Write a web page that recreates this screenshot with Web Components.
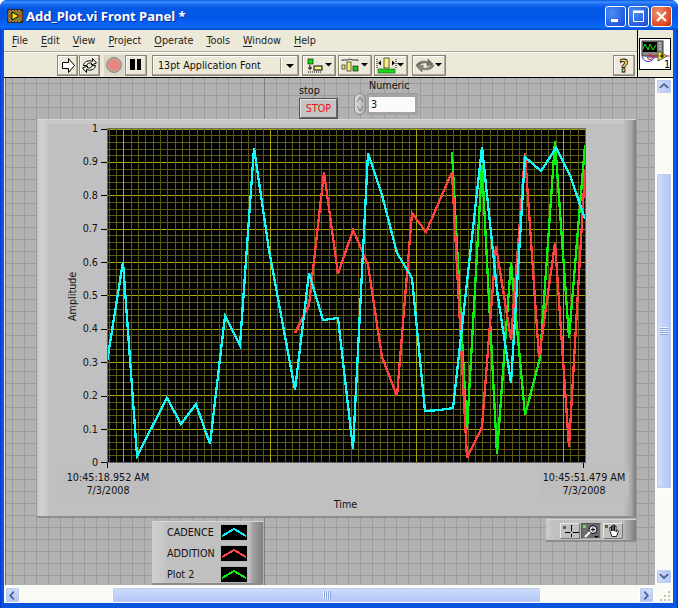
<!DOCTYPE html>
<html>
<head>
<meta charset="utf-8">
<title>Add_Plot.vi Front Panel</title>
<style>
	html, body { margin: 0; padding: 0; background: #fff; }
	body { font: 10.7px "DejaVu Sans", sans-serif; font-stretch: condensed; color: #111; }
</style>
</head>
<body>

<xp-window caption="Add_Plot.vi Front Panel *">
	<lv-menubar slot="menu"></lv-menubar>
	<lv-toolbar slot="toolbar"></lv-toolbar>
	<lv-vi-icon slot="icon"></lv-vi-icon>
	<lv-panel slot="panel">
		<lv-stop style="left:295px;top:6px"></lv-stop>
		<lv-numeric style="left:350px;top:1px" value="3"></lv-numeric>
		<lv-graph style="left:33px;top:41px"></lv-graph>
		<lv-legend style="left:148px;top:443px"></lv-legend>
		<lv-palette style="left:542px;top:441px"></lv-palette>
	</lv-panel>
	<xp-scrollbar slot="vscroll" orientation="v" before="79" size="316"></xp-scrollbar>
	<xp-scrollbar slot="hscroll" orientation="h" before="92" size="429"></xp-scrollbar>
</xp-window>

<script>
class XpWindow extends HTMLElement {
	constructor() {
		super();
		this.shadowDOM = this.attachShadow({mode: 'open'});
	}

	connectedCallback() {
		this.shadowDOM.innerHTML = `
		<style>
		:host {
			display: block;
			width: 678px;
			height: 608px;
			box-sizing: border-box;
			padding: 0 5px 5px 4px;
			background: linear-gradient(90deg, #0831d9 0, #0855dd 2px, #0855dd 4px, #0855dd 673px, #0a5fe8 675px, #0831c9 678px);
			border-radius: 7px 7px 0 0;
			overflow: hidden;
		}
		.title {
			height: 30px;
			box-sizing: border-box;
			margin: 0 -5px 0 -4px;
			padding: 6px 6px 0 7px;
			display: flex;
			align-items: flex-start;
			gap: 3px;
			background: linear-gradient(180deg, #0a5ae6 0, #3b8ffb 2px, #1f70f4 4px, #0458e6 8px, #0357e8 18px, #0662f4 24px, #0a6cfa 27px, #0348d0 30px);
		}
		.title > svg { margin-top: 3px; }
		.caption {
			flex: 1;
			color: #fff;
			font: bold 13px/21px "Noto Sans", sans-serif;
			font-stretch: normal;
			text-shadow: 1px 1px 0 #0b2a9a;
			white-space: nowrap;
		}
		.btns { display: flex; gap: 2px; }
		.btn {
			width: 21px;
			height: 21px;
			box-sizing: border-box;
			border: 1px solid #fff;
			border-radius: 3px;
			background: radial-gradient(circle at 30% 30%, #4f8ef5, #2259dc 75%, #1a48c0);
			display: block;
		}
		.btn.close { background: radial-gradient(circle at 30% 30%, #f09070, #dc4a22 70%, #b53010); }
		.btn svg { display: block; width: 19px; height: 19px; }
		.head { display: flex; height: 48px; background: #ece9d8; border-bottom: 1px solid #000; box-sizing: border-box; }
		.bars { width: 633px; display: flex; flex-direction: column; border-right: 1px solid #000; }
		.iconbox { flex: 1; display: flex; align-items: center; justify-content: center; padding: 0 1px 0 0; }
		.mid { display: flex; height: 507px; }
		.panel { width: 651px; }
		.vs { width: 18px; }
		.foot { display: flex; height: 18px; }
		.hs { width: 651px; }
		.grip { flex: 1; background: #fbfbf6; }
		</style>
		<div class="title">
			<svg width="16" height="14" viewBox="0 1 16 14">
				<rect x="0" y="1" width="16" height="14" fill="#3a2a10"/>
				<rect x="1" y="3" width="14" height="10" fill="#8a7a30"/>
				<path d="M3 2v1M6 2v1M9 2v1M12 2v1M3 13v1M6 13v1M9 13v1M12 13v1" stroke="#fff"/>
				<path d="M5 4l7 4-7 4z" fill="#f4e818" stroke="#000"/>
				<path d="M0 8h5M11 8h5" stroke="#e02020"/>
			</svg>
			<span class="caption">${this.getAttribute('caption')}</span>
			<span class="btns">
				<span class="btn"><svg viewBox="0 0 19 19"><rect x="5" y="12" width="7" height="3" fill="#fff"/></svg></span>
				<span class="btn"><svg viewBox="0 0 19 19"><path d="M4.500 5.500h10v9h-10z" fill="none" stroke="#fff"/><path d="M4 4.500h11" stroke="#fff" stroke-width="2"/></svg></span>
				<span class="btn close"><svg viewBox="0 0 19 19"><path d="M5 5l9 9M14 5l-9 9" stroke="#fff" stroke-width="2.200"/></svg></span>
			</span>
		</div>
		<div class="head">
			<div class="bars"><slot name="menu"></slot><slot name="toolbar"></slot></div>
			<div class="iconbox"><slot name="icon"></slot></div>
		</div>
		<div class="mid">
			<div class="panel"><slot name="panel"></slot></div>
			<div class="vs"><slot name="vscroll"></slot></div>
		</div>
		<div class="foot">
			<div class="hs"><slot name="hscroll"></slot></div>
			<div class="grip">
				<svg width="18" height="18" viewBox="0 0 18 18"><path d="M13 6h2v2h-2zM13 10h2v2h-2zM9 10h2v2H9zM13 14h2v2h-2zM9 14h2v2H9zM5 14h2v2H5z" fill="#c4c1ae"/></svg>
			</div>
		</div>
		`;
	}
}
customElements.define('xp-window', XpWindow);

class LvMenubar extends HTMLElement {
	constructor() {
		super();
		this.shadowDOM = this.attachShadow({mode: 'open'});
		const items = ['File', 'Edit', 'View', 'Project', 'Operate', 'Tools', 'Window', 'Help'];
		this.shadowDOM.innerHTML = `
		<style>
		:host {
			display: flex;
			height: 22px;
			box-sizing: border-box;
			align-items: center;
			gap: 13px;
			padding-left: 8px;
			border-bottom: 1px solid #aca899;
			box-shadow: 0 1px 0 #fff;
			color: #222;
		}
		u { text-decoration-thickness: 1px; text-underline-offset: 2px; }
		</style>
		${items.map(i => `<span><u>${i[0]}</u>${i.slice(1)}</span>`).join('')}
		`;
	}
}
customElements.define('lv-menubar', LvMenubar);

class LvToolbar extends HTMLElement {
	constructor() {
		super();
		this.shadowDOM = this.attachShadow({mode: 'open'});
		const arrow = '<path d="M22 7h7l-3.500 3.500z" fill="#000"/>';
		this.shadowDOM.innerHTML = `
		<style>
		:host {
			display: flex;
			flex: 1;
			align-items: center;
			padding: 1px 0 0 53px;
			height: 25px;
			box-sizing: border-box;
		}
		.b {
			height: 21px;
			box-sizing: border-box;
			border: 1px solid;
			border-color: #fff #5c5a4e #5c5a4e #fff;
			outline: 1px solid #8a8778;
			outline-offset: -1px;
			background: #ece9d8;
			display: flex;
			align-items: center;
			justify-content: center;
			box-shadow: inset -1px -1px 0 #aca899, inset 1px 1px 0 #fff;
		}
		.flat { outline: none; border-color: #d8d5c4; background: #dcd9c8; box-shadow: none; }
		.font {
			width: 147px;
			margin-left: 5px;
			justify-content: flex-start;
			padding-left: 5px;
			position: relative;
			color: #111;
		}
		.font i {
			position: absolute;
			right: 0;
			top: 2px;
			bottom: 2px;
			width: 17px;
			border-left: 1px solid #9a9788;
			box-shadow: inset 1px 0 0 #fff;
		}
		.font i::after {
			content: "";
			position: absolute;
			left: 5px;
			top: 6px;
			border: 4px solid transparent;
			border-top: 4px solid #000;
			border-bottom: 0;
		}
		svg { display: block; }
		</style>
		<span class="b" style="width:21px"><svg width="19" height="19" viewBox="0 0 19 19"><path d="M4.500 6.500h6v-4l6 7-6 7v-4h-6z" fill="#fff" stroke="#000"/></svg></span>
		<span class="b" style="width:21px;margin-left:1px"><svg width="19" height="19" viewBox="0 0 19 19"><path d="M3.500 9.500a6 5 0 0 1 9-4v-3l4 4.500-5 2v-2a4 3 0 0 0-5 2.500z" fill="#fff" stroke="#000"/><path d="M15.500 9.500a6 5 0 0 1-9 4v3l-4-4.500 5-2v2a4 3 0 0 0 5-2.500z" fill="#fff" stroke="#000"/></svg></span>
		<span class="b flat" style="width:20px;margin-left:4px"><svg width="18" height="18" viewBox="0 0 18 18"><circle cx="9" cy="9" r="7.500" fill="#b0ada0" stroke="#8e8b7e"/><circle cx="9" cy="9" r="6" fill="#e8877f"/></svg></span>
		<span class="b" style="width:22px;margin-left:1px"><svg width="20" height="20" viewBox="0 0 20 20"><path d="M4 4h5v11H4zM11 4h4v11h-4z" fill="#000"/></svg></span>
		<span class="b font">13pt Application Font<i></i></span>
		<span class="b" style="width:34px;margin-left:3px"><svg width="32" height="19" viewBox="0 0 32 19"><rect x="5" y="3" width="5" height="5" fill="#18d818" stroke="#000" stroke-width="0.600"/><path d="M7 9v5M5 12h4" stroke="#000"/><rect x="11" y="10" width="8" height="4" fill="#f8f078" stroke="#000"/><path d="M5 16h14" stroke="#000" stroke-dasharray="1 1"/>${arrow}</svg></span>
		<span class="b" style="width:34px;margin-left:2px"><svg width="32" height="19" viewBox="0 0 32 19"><path d="M3 5v-1h6l2-1 2 1h6v1" fill="none" stroke="#333"/><rect x="3" y="9" width="3" height="4" fill="#f8f078" stroke="#000" stroke-width="0.600"/><rect x="8" y="6" width="4" height="9" fill="#f8f078" stroke="#000" stroke-width="0.600"/><rect x="14" y="10" width="5" height="5" fill="#18c818" stroke="#000" stroke-width="0.600"/>${arrow}</svg></span>
		<span class="b" style="width:34px;margin-left:2px"><svg width="32" height="19" viewBox="0 0 32 19"><path d="M2 3v9M21 3v9" stroke="#000" stroke-dasharray="1 1"/><path d="M3 7l3-2.500v5zM20 7l-3-2.500v5z" fill="#000"/><rect x="9" y="2" width="5" height="10" fill="#f8f078" stroke="#000" stroke-width="0.600"/><rect x="3" y="13" width="17" height="4" fill="#18d818" stroke="#185018" stroke-width="0.600"/>${arrow}</svg></span>
		<span class="b" style="width:34px;margin-left:4px"><svg width="32" height="19" viewBox="0 0 32 19"><path d="M3 10a8 6 0 0 1 12-4V3l5 5-6 2V7a6 4 0 0 0-8 3z" fill="#77756a" stroke="#5a584e" stroke-width="0.600"/><path d="M21 9a8 6 0 0 1-12 4v3l-5-5 6-2v3a6 4 0 0 0 8-3z" fill="#8e8c80" stroke="#5a584e" stroke-width="0.600"/>${arrow}</svg></span>
		<span style="flex:1"></span>
		<span class="b" style="width:22px;margin-right:2px"><svg width="20" height="19" viewBox="0 0 20 19"><text x="10" y="16" text-anchor="middle" font-family="DejaVu Sans" font-weight="bold" font-size="17" fill="#f4ee70" stroke="#000" stroke-width="0.800">?</text></svg></span>
		`;
	}
}
customElements.define('lv-toolbar', LvToolbar);

class LvViIcon extends HTMLElement {
	constructor() {
		super();
		this.shadowDOM = this.attachShadow({mode: 'open'});
		this.shadowDOM.innerHTML = `
		<style>
		:host { display: block; width: 32px; height: 32px; margin-top: 1px; }
		svg { display: block; }
		</style>
		<svg width="32" height="32" viewBox="0 0 32 32">
			<rect x="0.500" y="0.500" width="31" height="31" fill="#fff" stroke="#000"/>
			<rect x="3" y="3" width="21" height="15" fill="#8a8a8a" stroke="#333"/>
			<rect x="4" y="4" width="14" height="10" fill="#000"/>
			<path d="M4 11l2-5 3 6 2-6 3 6 3-5" fill="none" stroke="#18e818"/>
			<path d="M20 5h2M20 8h2M20 11h2" stroke="#ddd"/>
			<path d="M3 19c3 6 9 6 13 0" fill="none" stroke="#2030c0"/>
			<path d="M9 19h15" stroke="#2030c0"/>
			<circle cx="11" cy="19" r="2.500" fill="none" stroke="#e02020"/>
			<path d="M12 18h13M27 18h5" stroke="#e02020"/>
			<path d="M19 13l9 5-9 5z" fill="#f8e010" stroke="#555"/>
			<path d="M21 18h4M23 16v4" stroke="#000"/>
			<text x="25" y="30" font-family="DejaVu Sans" font-size="11" fill="#000">1</text>
		</svg>
		`;
	}
}
customElements.define('lv-vi-icon', LvViIcon);

class LvPanel extends HTMLElement {
	constructor() {
		super();
		this.shadowDOM = this.attachShadow({mode: 'open'});
		this.shadowDOM.innerHTML = `
		<style>
		:host {
			display: block;
			position: relative;
			width: 651px;
			height: 507px;
			overflow: hidden;
			background-color: #b2b2b2;
			background-image:
				linear-gradient(90deg, #ece9d8 1px, #6e6e6e 1px, #6e6e6e 2px, transparent 2px),
				linear-gradient(90deg, #808080 1px, transparent 1px),
				linear-gradient(#9c9c9c 1px, transparent 1px),
				linear-gradient(90deg, #9c9c9c 1px, transparent 1px);
			background-size: 651px 507px, 651px 507px, 12px 12px, 12px 12px;
			background-position: 0 0, 260px 0, 0 5px, 8px 0;
			background-repeat: no-repeat, no-repeat, repeat, repeat;
		}
		::slotted(*) { position: absolute; }
		</style>
		<slot></slot>
		`;
	}
}
customElements.define('lv-panel', LvPanel);

class LvStop extends HTMLElement {
	constructor() {
		super();
		this.shadowDOM = this.attachShadow({mode: 'open'});
		this.shadowDOM.innerHTML = `
		<style>
		:host { display: block; line-height: 14px; }
		.b {
			width: 39px;
			height: 21px;
			box-sizing: border-box;
			border: 2px solid;
			border-color: #e0e0e0 #666 #666 #e0e0e0;
			outline: 1px solid #555;
			outline-offset: -1px;
			background: #c4c4c4;
			color: #f01010;
			text-align: center;
			line-height: 17px;
		}
		</style>
		<div>stop</div>
		<div class="b">STOP</div>
		`;
	}
}
customElements.define('lv-stop', LvStop);

class LvNumeric extends HTMLElement {
	constructor() {
		super();
		this.shadowDOM = this.attachShadow({mode: 'open'});
		this.shadowDOM.innerHTML = `
		<style>
		:host { display: block; line-height: 14px; width: 70px; }
		.label { padding-left: 15px; }
		.row { display: flex; align-items: center; }
		.spin {
			width: 12px;
			height: 22px;
			border-radius: 6px;
			background: linear-gradient(90deg, #e0e0e0, #aaa);
			border: 1px solid #8a8a8a;
			box-sizing: border-box;
		}
		.spin svg { display: block; }
		.box {
			margin-left: 1px;
			padding: 3px 3px 3px 2px;
			background: #a4a4a4;
			border-top: 1px solid #999;
		}
		.f {
			width: 46px;
			height: 15px;
			background: #fafafa;
			padding-left: 2px;
			box-sizing: border-box;
			line-height: 15px;
		}
		</style>
		<div class="label">Numeric</div>
		<div class="row">
			<span class="spin"><svg width="10" height="20" viewBox="0 0 10 20"><path d="M2 8l3-5 3 5M2 12l3 5 3-5" fill="none" stroke="#777"/></svg></span>
			<span class="box"><div class="f">${this.getAttribute('value') || ''}</div></span>
		</div>
		`;
	}
}
customElements.define('lv-numeric', LvNumeric);

class LvGraph extends HTMLElement {
	constructor() {
		super();
		this.shadowDOM = this.attachShadow({mode: 'open'});
	}

	connectedCallback() {
		const lines = [];
		for (let i = 0; i <= 50; i++) {
			const y = Math.round(0.5 + i * 333.5 / 50);
			lines.push(`<path d="M0 ${y - 0.5}H478" stroke="${i % 5 == 0 ? '#a8a80c' : '#5c5a12'}"/>`);
		}
		for (let i = 0; i < 66; i++) {
			const x = Math.round(0.8 + i * 7.325);
			lines.push(`<path d="M${x + 0.5} 0V334" stroke="${(i - 2) % 20 == 0 ? '#a8a80c' : '#5c5a12'}"/>`);
		}
		// traces, in page coordinates
		const cadence = '107,362 123,262 137,456 167,398 181,424 196,404 210,444 225,316 240,345 254,148 269,250 295,390 309,273 323,320 338,318 353,449 368,153 382,195 397,253 412,278 425,411 440,410 453,408 482,147 497,290 511,383 525,157 541,171 556,148 570,175 585,219';
		const addition = '295,333 309,305 324,172 338,274 353,230 363,253 368,265 382,357 397,396 412,213 426,232 452,172 467,458 482,427 496,246 511,340 525,153 539,358 555,243 569,447 585,170';
		const plot2 = '452,152 467,430 482,165 497,454 511,262 525,415 540,358 555,141 569,338 585,145';
		const trace = (pts, color) => `<polyline points="${pts.split(' ').map(p => {
			const [x, y] = p.split(',');
			return (x - 108) + ',' + (y - 129);
		}).join(' ')}" fill="none" stroke="${color}" stroke-width="2.300"/>`;
		const ticks = ['1', '0.9', '0.8', '0.7', '0.6', '0.5', '0.4', '0.3', '0.2', '0.1', '0'];

		this.shadowDOM.innerHTML = `
		<style>
		:host {
			display: block;
			width: 599px;
			height: 399px;
			box-sizing: border-box;
			background: #c0c0c0;
			border-top: 1px solid #d8d8d8;
			border-bottom: 2px solid #8c8c8c;
			color: #111;
			overflow: hidden;
		}
		.inner { position: relative; display: grid; grid-template-columns: 71px 477px 51px; padding-top: 9px; }
		.yaxis { display: flex; height: 348px; margin-top: -7px; }
		.ytitle {
			width: 14px;
			margin-left: 29px;
			writing-mode: vertical-rl;
			transform: rotate(180deg);
			text-align: center;
			line-height: 14px;
		}
		.ytitle span { display: block; }
		.scale { flex: 1; display: flex; flex-direction: column; justify-content: space-between; align-items: flex-end; }
		.scale div { height: 14px; line-height: 14px; display: flex; align-items: center; gap: 3px; }
		.scale i { width: 6px; height: 1px; background: #000; margin-right: 1px; display: block; }
		.plot {
			width: 477px;
			height: 333px;
			background: #000;
			box-shadow: 0 0 0 1px #666;
		}
		.plot svg { display: block; }
		.foot {
			grid-column: 1 / 3;
			display: flex;
			justify-content: space-between;
			padding-left: 26px;
			width: 592px;
			box-sizing: border-box;
			text-align: center;
			line-height: 13px;
			margin-top: -7px;
		}
		.stamp { width: 90px; position: relative; padding-top: 8px; background: #bebebe; background-clip: content-box; white-space: nowrap; }
		.stamp::before { content: ""; position: absolute; left: 44px; top: 0; width: 1px; height: 5px; background: #000; }
		.time { grid-column: 2; text-align: center; margin: 1px 2px 0 0; line-height: 14px; }
		.side { position: absolute; left: 0; top: 0; width: 11px; height: 397px; background: linear-gradient(90deg, #c4c4c4, #d2d2d2 40%, #c6c6c6); }
		.right { position: absolute; right: 0; top: 0; width: 12px; height: 397px; background: linear-gradient(90deg, #c0c0c0, #a8a8a8 60%, #7a7a7a); }
		.topband { position: absolute; left: 0; right: 0; top: 0; height: 4px; background: #c8c8c8; }
		</style>
		<div class="inner">
			<div class="topband"></div>
			<div class="side"></div>
			<div class="right"></div>
			<div class="yaxis">
				<div class="ytitle"><span>Amplitude</span></div>
				<div class="scale">${ticks.map(t => `<div>${t}<i></i></div>`).join('')}</div>
			</div>
			<div class="plot">
				<svg width="477" height="333" viewBox="0 0 477 333">
					<g shape-rendering="crispEdges">${lines.join('')}</g>
					<g shape-rendering="crispEdges">
						${trace(plot2, '#10f010')}
						${trace(addition, '#ff4040')}
						${trace(cadence, '#14fafa')}
					</g>
				</svg>
			</div>
			<div></div>
			<div class="foot">
				<div class="stamp">10:45:18.952 AM<br>7/3/2008</div>
				<div class="stamp">10:45:51.479 AM<br>7/3/2008</div>
			</div>
			<div class="time">Time</div>
		</div>
		`;
	}
}
customElements.define('lv-graph', LvGraph);

class LvLegend extends HTMLElement {
	constructor() {
		super();
		this.shadowDOM = this.attachShadow({mode: 'open'});
		const rows = [['CADENCE', '#14eefa'], ['ADDITION', '#ff4848'], ['Plot 2', '#10f010']];
		this.shadowDOM.innerHTML = `
		<style>
		:host {
			display: block;
			width: 111px;
			height: 64px;
			box-sizing: border-box;
			padding: 0 0 0 15px;
			background: linear-gradient(90deg, #d0d0d0 0, #c6c6c6 12px, #c0c0c0 14px, #c0c0c0 97px, #a0a0a0 101px, #808080 111px);
			border-top: 1px solid #d8d8d8;
			border-bottom: 2px solid #8c8c8c;
			color: #111;
		}
		.row { display: grid; grid-template-columns: 53px 28px; align-items: center; height: 21px; }
		svg { display: block; border: 1px solid #b8b8b8; box-sizing: border-box; }
		</style>
		${rows.map(r => `<div class="row"><span>${r[0]}</span><svg width="28" height="17" viewBox="0 0 26 15"><rect width="26" height="15" fill="#000"/><path d="M1 11l12-7 12 7" fill="none" stroke="${r[1]}" stroke-width="2" shape-rendering="crispEdges"/></svg></div>`).join('')}
		`;
	}
}
customElements.define('lv-legend', LvLegend);

class LvPalette extends HTMLElement {
	constructor() {
		super();
		this.shadowDOM = this.attachShadow({mode: 'open'});
		this.shadowDOM.innerHTML = `
		<style>
		:host {
			display: flex;
			gap: 1px;
			width: 90px;
			height: 23px;
			box-sizing: border-box;
			padding: 3px 0 0 14px;
			background: linear-gradient(90deg, #cdcdcd 0, #c0c0c0 8px, #c0c0c0 76px, #9c9c9c 84px, #7a7a7a 90px);
			border-top: 1px solid #d8d8d8;
			border-bottom: 2px solid #8c8c8c;
		}
		span {
			width: 20px;
			height: 16px;
			box-sizing: border-box;
			background: #c0c0c0;
			border: 1px solid;
			border-color: #e8e8e8 #777 #777 #e8e8e8;
		}
		span.on { background: #6c6c6c; border-color: #555 #aaa #aaa #555; }
		svg { display: block; }
		</style>
		<span><svg width="18" height="14" viewBox="0 0 18 14"><path d="M2 2h3v3H2z" fill="#4a6a4a"/><path d="M10.500 1v12M4 8.500h14" stroke="#000"/><circle cx="10.500" cy="8.500" r="1" fill="#fff"/></svg></span>
		<span class="on"><svg width="18" height="14" viewBox="0 0 18 14"><path d="M1 1h3v3H1z" fill="#60e060"/><circle cx="11" cy="5.500" r="4" fill="#dcdcf0" stroke="#000"/><path d="M9 5.500h4M11 3.500v4" stroke="#000"/><path d="M8 8l-5 5" stroke="#fff" stroke-width="2"/><path d="M12 12h5l-2.500 2z" fill="#000"/></svg></span>
		<span style="margin-left:1px"><svg width="18" height="14" viewBox="0 0 18 14"><path d="M1 1h3v3H1z" fill="#4a6a4a"/><path d="M6 7V3.500h1.500V7 2h1.500v5-6h1.500v6-5H12v6l1-2 1.500 1-2 5.500H8z" fill="#fff" stroke="#000" stroke-width="0.800"/></svg></span>
		`;
	}
}
customElements.define('lv-palette', LvPalette);

class XpScrollbar extends HTMLElement {
	constructor() {
		super();
		this.shadowDOM = this.attachShadow({mode: 'open'});
	}

	connectedCallback() {
		const v = this.getAttribute('orientation') == 'v';
		const before = this.getAttribute('before');
		const size = this.getAttribute('size');
		const chev = d => `<svg width="15" height="15" viewBox="0 0 15 15"><path d="${d}" fill="none" stroke="#4d6185" stroke-width="2"/></svg>`;
		this.shadowDOM.innerHTML = `
		<style>
		:host {
			display: flex;
			flex-direction: ${v ? 'column' : 'row'};
			box-sizing: border-box;
			width: ${v ? '18px' : '651px'};
			height: ${v ? '507px' : '18px'};
			background: #fbfbf6;
			padding: ${v ? '1px' : '2px 1px 0 1px'};
		}
		.btn, .thumb {
			box-sizing: border-box;
			border: 1px solid #fff;
			border-radius: 2px;
			background: linear-gradient(${v ? '90deg' : '180deg'}, #d2def9, #c0d0fb 50%, #b4c6f6);
			box-shadow: 0 0 0 1px #bccbe8 inset;
			display: flex;
			align-items: center;
			justify-content: center;
			flex: none;
		}
		.btn { width: ${v ? '16px' : '15px'}; height: ${v ? '15px' : '16px'}; }
		.thumb { width: ${v ? '16px' : size + 'px'}; height: ${v ? size + 'px' : '16px'}; margin-${v ? 'top' : 'left'}: ${before}px; }
		.grip { width: 8px; height: 8px; background: repeating-linear-gradient(${v ? '180deg' : '90deg'}, #eef3fe 0 1px, #8ca2dc 1px 2px); }
		.sp { flex: 1; }
		svg { display: block; }
		</style>
		<span class="btn">${chev(v ? 'M3 9l4.500-4 4.500 4' : 'M9 3L5 7.500 9 12')}</span>
		<span class="thumb"><span class="grip"></span></span>
		<span class="sp"></span>
		<span class="btn">${chev(v ? 'M3 5l4.500 4 4.500-4' : 'M5 3l4 4.500L5 12')}</span>
		`;
	}
}
customElements.define('xp-scrollbar', XpScrollbar);
</script>
</body>
</html>
